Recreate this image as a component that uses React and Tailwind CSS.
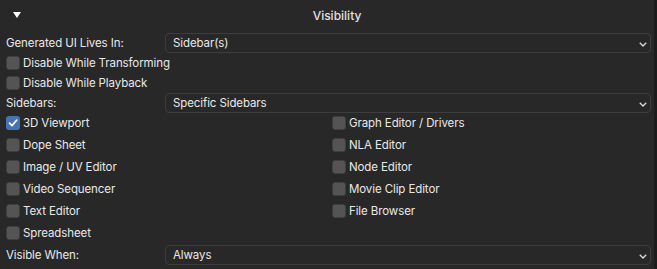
import React from "react";

function Chevron() {
  return (
    <svg width="8" height="5" viewBox="0 0 8 5" className="block">
      <path d="M0.8 0.8 L4 4 L7.2 0.8" fill="none" stroke="#d6d6d6" strokeWidth="1.4" />
    </svg>
  );
}

function Dropdown({ value }) {
  return (
    <div className="flex-1 h-[20px] rounded-[4px] border border-[#3d3d3d] bg-[#282828] flex items-center pl-[7px] pr-[3px] text-[#e8e8e8]">
      <span className="flex-1 leading-none pt-[1px]">{value}</span>
      <span className="mt-[3px]">
        <Chevron />
      </span>
    </div>
  );
}

function Checkbox({ checked }) {
  return (
    <div
      className={
        "w-[14px] h-[14px] rounded-[3px] flex items-center justify-center shrink-0 " +
        (checked ? "bg-[#4772b3]" : "bg-[#545454] border border-[#3f3f3f]")
      }
    >
      {checked && (
        <svg width="10" height="10" viewBox="0 0 10 10">
          <path d="M1.5 5.2 L4 7.6 L8.6 2.2" fill="none" stroke="#ffffff" strokeWidth="1.7" strokeLinecap="round" strokeLinejoin="round" />
        </svg>
      )}
    </div>
  );
}

function Check({ label, checked }) {
  return (
    <div className="h-[20px] flex items-center gap-[3px]">
      <Checkbox checked={checked} />
      <span className="leading-none text-[#e8e8e8] pt-[2px]">{label}</span>
    </div>
  );
}

function LabeledRow({ label, value }) {
  return (
    <div className="h-[20px] flex items-center">
      <span className="w-[159px] leading-none text-[#e8e8e8] pt-[2px]">{label}</span>
      <Dropdown value={value} />
    </div>
  );
}

export default function App() {
  const left = ["3D Viewport", "Dope Sheet", "Image / UV Editor", "Video Sequencer", "Text Editor", "Spreadsheet"];
  const right = ["Graph Editor / Drivers", "NLA Editor", "Node Editor", "Movie Clip Editor", "File Browser"];
  return (
    <div
      className="w-[657px] h-[269px] bg-[#282828] border-r-[3px] border-[#1c1c1c] text-[11.5px] tracking-[-0.1px] overflow-hidden"
      style={{ fontFamily: "Inter, 'Noto Sans', sans-serif" }}
    >
      <div className="h-[30px] flex items-center">
        <div className="w-[34px] pl-[13px] flex items-center">
          <svg width="8" height="6" viewBox="0 0 8 6" className="block">
            <path d="M0 0 L8 0 L4 6 Z" fill="#ffffff" />
          </svg>
        </div>
        <div className="flex-1 text-center pr-[14px] text-[12px] tracking-normal font-medium text-[#e0e0e0] pt-[1px]">Visibility</div>
      </div>
      <div className="pt-[3px] pl-[6px] pr-[3px] flex flex-col">
        <LabeledRow label="Generated UI Lives In:" value="Sidebar(s)" />
        <Check label="Disable While Transforming" />
        <Check label="Disable While Playback" />
        <LabeledRow label="Sidebars:" value="Specific Sidebars" />
        <div className="grid grid-cols-[326px_1fr] gap-y-[2px]">
          {left.map((l, i) => (
            <React.Fragment key={l}>
              <Check label={l} checked={i === 0} />
              {right[i] ? <Check label={right[i]} /> : <div />}
            </React.Fragment>
          ))}
        </div>
        <div className="mt-[2px]">
          <LabeledRow label="Visible When:" value="Always" />
        </div>
      </div>
    </div>
  );
}
